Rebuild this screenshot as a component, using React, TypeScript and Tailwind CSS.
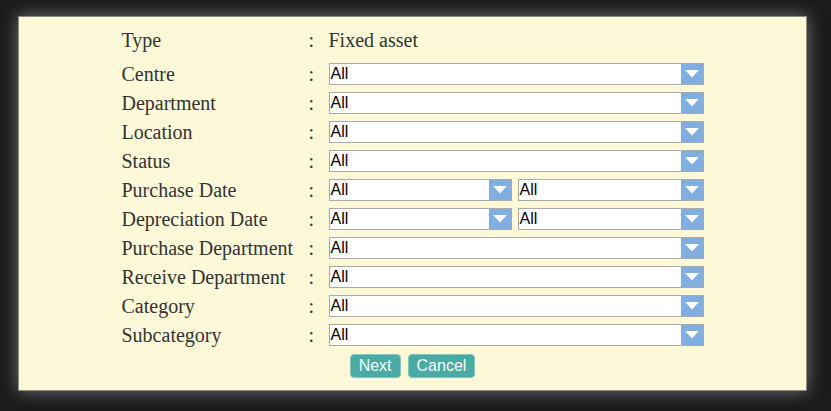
import React from "react";

const serif = { fontFamily: '"Liberation Serif", "Times New Roman", serif' };
const sans = { fontFamily: '"Liberation Sans", Arial, sans-serif' };

const Arrow = () => (
  <div className="flex h-full w-[22px] items-center justify-center bg-[#80aee0]">
    <svg width="14" height="8" viewBox="0 0 14 8">
      <polygon points="0,0 14,0 7,7.5" fill="#ffffff" />
    </svg>
  </div>
);

const Dropdown: React.FC<{ className?: string }> = ({ className = "" }) => (
  <div className={`flex h-[22px] border border-[#a9a9a9] bg-white ${className}`}>
    <span className="flex-1 pl-px text-[16px] leading-[20px] text-black" style={sans}>
      All
    </span>
    <Arrow />
  </div>
);

const rows: { label: string; pair?: boolean }[] = [
  { label: "Centre" },
  { label: "Department" },
  { label: "Location" },
  { label: "Status" },
  { label: "Purchase Date", pair: true },
  { label: "Depreciation Date", pair: true },
  { label: "Purchase Department" },
  { label: "Receive Department" },
  { label: "Category" },
  { label: "Subcategory" },
];

const App: React.FC = () => {
  return (
    <div className="h-[411px] w-[831px] bg-[#1b1b1b] pl-[18px] pt-[16px]">
      <div className="flex h-[375px] w-[789px] flex-col items-center border border-[#8a8a8a] bg-[#fdf9d8] pt-[8px] shadow-[0_0_16px_rgba(190,190,190,0.55)]">
        <div className="w-[582px] text-[20px] text-[#333]" style={serif}>
          <div className="flex h-[29px] items-center">
            <span className="w-[187px]">Type</span>
            <span className="w-[20px]">:</span>
            <span>Fixed asset</span>
          </div>
          <div className="mt-[5px]">
            {rows.map((r) => (
              <div key={r.label} className="flex h-[29px] items-center">
                <span className="w-[187px] whitespace-nowrap">{r.label}</span>
                <span className="w-[20px]">:</span>
                {r.pair ? (
                  <div className="flex w-[375px] gap-[6px]">
                    <Dropdown className="w-[183px]" />
                    <Dropdown className="flex-1" />
                  </div>
                ) : (
                  <Dropdown className="w-[375px]" />
                )}
              </div>
            ))}
          </div>
        </div>
        <div className="mt-[5px] flex gap-[7px]" style={sans}>
          <button className="h-[24px] rounded-[4px] border border-[#86c6c1] bg-[#4aaaa4] px-[8px] text-[16px] leading-[20px] text-white">
            Next
          </button>
          <button className="h-[24px] rounded-[4px] border border-[#86c6c1] bg-[#4aaaa4] px-[8px] text-[16px] leading-[20px] text-white">
            Cancel
          </button>
        </div>
      </div>
    </div>
  );
};

export default App;
